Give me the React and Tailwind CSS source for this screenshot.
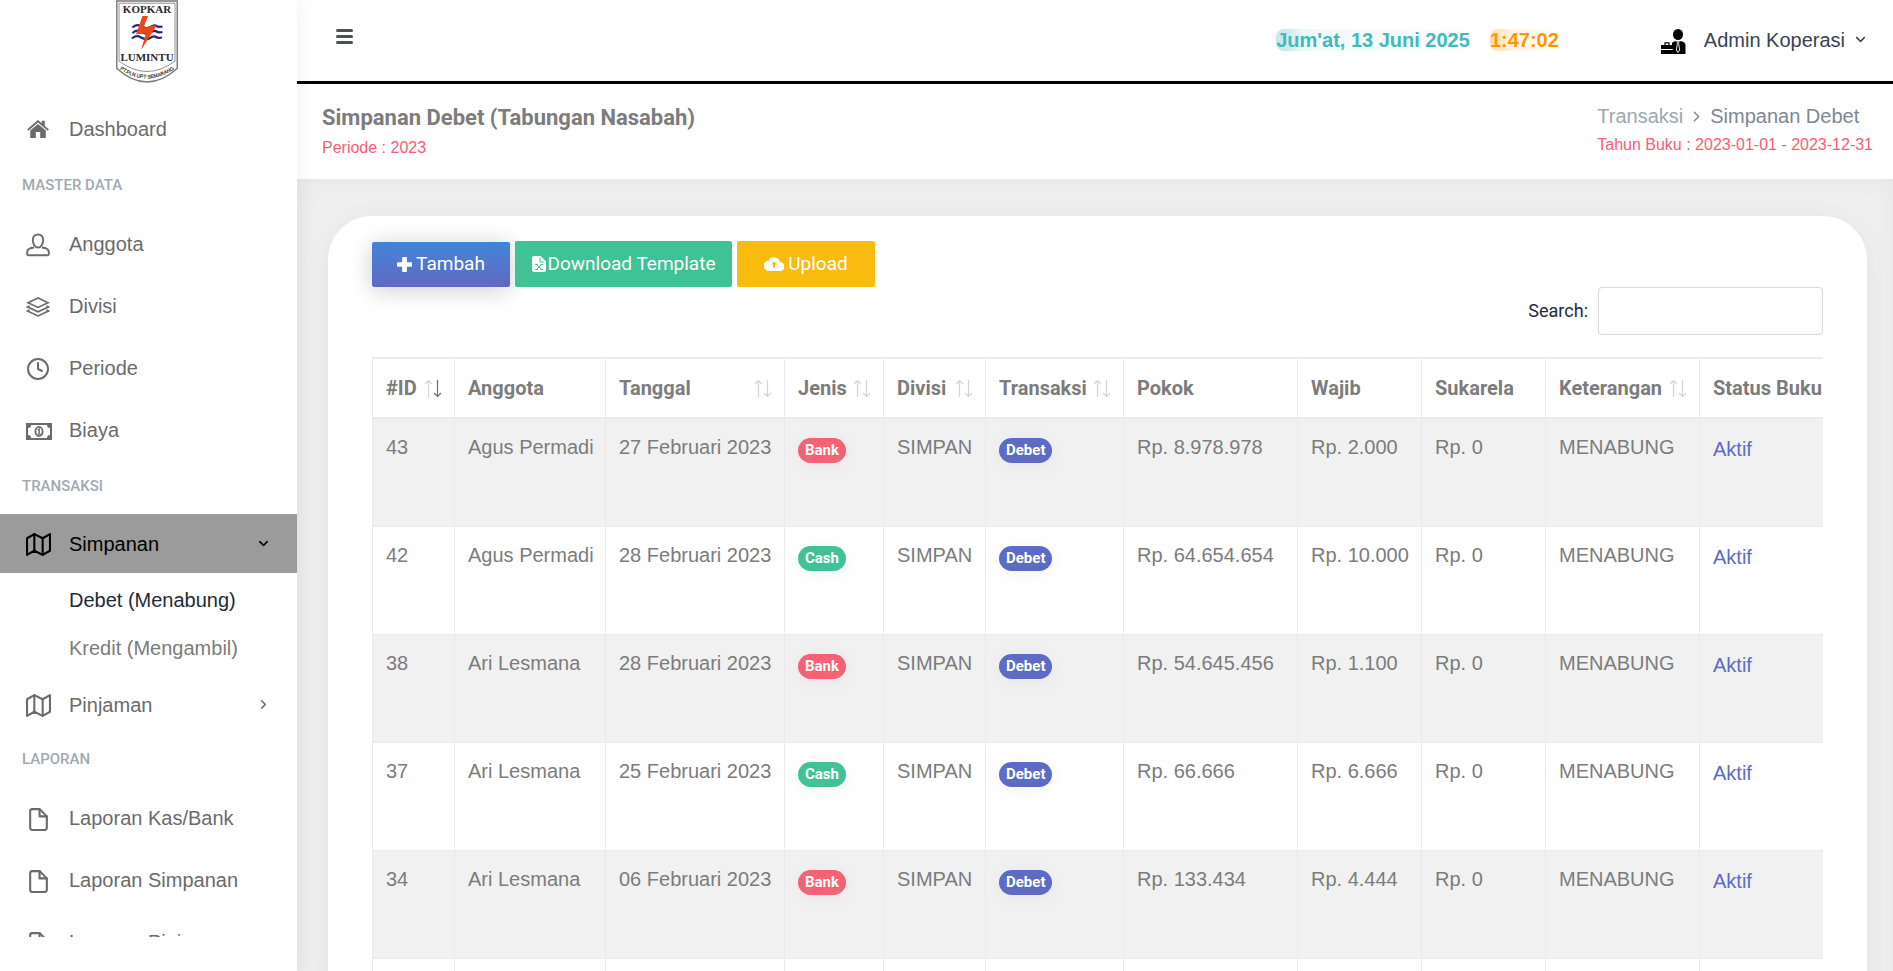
import { FiMap, FiFile, FiClock, FiChevronDown, FiChevronRight } from "react-icons/fi";

function HomeIcon() {
  return (
    <svg className="size-6" viewBox="0 0 24 24" fill="#6b6b6b">
      <path d="M12 2 1.2 11.3l1.2 1.5L12 4.6l9.6 8.2 1.2-1.5-4-3.4V2.8h-3v2.5z" />
      <path d="M12 6 4.2 12.6V20h5.6v-6h4.4v6h5.6v-7.4z" />
    </svg>
  );
}

function PersonIcon() {
  return (
    <svg className="size-6" viewBox="0 0 24 24" fill="none" stroke="#6b6b6b" strokeWidth="1.9">
      <path d="M12 1.500c-3.600 0-5.200 2.200-5.200 5.500 0 3.800 2.200 7.500 5.200 7.500s5.200-3.700 5.200-7.500c0-3.300-1.600-5.500-5.200-5.500z" />
      <path d="M8.200 14.500C4 14.800 1.200 15.800 1.200 19v1.800c0 .9.600 1.500 1.500 1.500h18.600c.9 0 1.500-.6 1.500-1.500V19c0-3.200-2.800-4.200-7-4.500" />
    </svg>
  );
}

function LayersIcon() {
  return (
    <svg className="size-6" viewBox="0 0 24 24" fill="none" stroke="#6b6b6b" strokeWidth="1.7">
      <path d="M12 3 2 7.700l10 4.700 10-4.700z" />
      <path d="m3.500 11-2 .9L12 16.800l10.500-4.900-2-.9" />
      <path d="m3.500 15-2 .9L12 20.900l10.500-5-2-.9" />
    </svg>
  );
}

function MoneyIcon() {
  return (
    <svg className="h-[17px] w-[26px]" viewBox="0 0 26 17">
      <path fill="#6b6b6b" fillRule="evenodd" d="M0 0h26v17H0zM5 2a3 3 0 0 1-3 3v7a3 3 0 0 1 3 3h16a3 3 0 0 1 3-3V5a3 3 0 0 1-3-3z" />
      <ellipse cx="13" cy="8.5" rx="3.6" ry="4.6" fill="none" stroke="#6b6b6b" strokeWidth="1.8" />
      <path d="M11.7 7.2 13.2 6v5m-1.800.2h3.400" fill="none" stroke="#6b6b6b" strokeWidth="1.3" />
    </svg>
  );
}

function BusinessmanIcon() {
  return (
    <svg className="size-[25px]" viewBox="0 0 25 25">
      <ellipse cx="17" cy="5.500" rx="5" ry="5.500" />
      <path d="M11 14c1-1.500 3-2 6-2s7.500.5 7.500 4.500V25H11z" />
      <path d="M15.800 12h2.400l-.6 2.200 1 6.800-1.600 2.600-1.600-2.600 1-6.800z" stroke="#fff" strokeWidth=".9" />
      <path d="M0 16h12v4H0zM0 21h12v4H0z" />
      <path d="M0 20.500h12" stroke="#fff" strokeWidth=".8" />
      <path d="M4 16v-2.200h4V16" fill="none" stroke="#000" strokeWidth="1.200" />
    </svg>
  );
}

function PlusIcon() {
  return (
    <svg className="size-[15px]" viewBox="0 0 16 16" fill="currentColor">
      <path d="M6.300 0h3.400a.8.8 0 0 1 .8.800v4.700h4.700a.8.8 0 0 1 .8.800v3.400a.8.8 0 0 1-.8.800h-4.700v4.700a.8.8 0 0 1-.8.800H6.300a.8.8 0 0 1-.8-.8v-4.700H.8a.8.8 0 0 1-.8-.8V6.300a.8.8 0 0 1 .8-.8h4.700V.8a.8.8 0 0 1 .8-.8z" />
    </svg>
  );
}

function ExcelIcon() {
  return (
    <svg className="h-4 w-[14px]" viewBox="0 0 14 16">
      <path fill="currentColor" d="M2 0h6.500L14 5.300V14a2 2 0 0 1-2 2H2a2 2 0 0 1-2-2V2a2 2 0 0 1 2-2z" />
      <path d="M8 1.500V6h4.500" fill="none" stroke="#3fc396" strokeWidth="1" />
      <path d="m4.500 8.500 5 5M9.500 8.500l-5 5M3.200 8.500h2.600m2.600 0H11m-7.800 5h2.600m2.600 0H11" fill="none" stroke="#3fc396" strokeWidth="1" />
    </svg>
  );
}

function CloudIcon() {
  return (
    <svg className="h-[14px] w-5" viewBox="0 0 20 14">
      <path fill="currentColor" d="M16.100 5.300A6.200 6.200 0 0 0 4.600 3.600 5.100 5.100 0 0 0 5 14h11a4.300 4.300 0 0 0 .1-8.700z" />
      <path fill="#f9bb0d" d="M10 4.300 12.900 7.600h-1.900v3.200H9V7.600H7.100z" />
    </svg>
  );
}

function Logo() {
  return (
    <svg className="h-[83px] w-[62px]" viewBox="0 0 62 83" role="img" aria-label="Kopkar Lumintu">
      <path d="M.8 1h60.400v67.500Q46 82 31 82T.8 68.500z" fill="#fff" stroke="#777" strokeWidth="1.4" />
      <path d="M3 3.200h56v58Q45 71.500 31 71.500T3 61.200z" fill="#fff" stroke="#777" strokeWidth=".8" />
      <g fill="none" stroke="#2e1f7a" strokeWidth="2.2">
        <path d="M16.500 27.500q4-4 9-1t9 .5 6-1 6 .5" />
        <path d="M16.500 33q4-4 9-1t9 .5 6-1 6 .5" />
        <path d="M16 38.500q4-4 9-1t9 .5 6-1 6 .5" />
      </g>
      <path d="M26.500 16H32l-4.500 11.500L41 25 25 50l5-16.500-10 .8z" fill="#ee4511" />
      <text x="31" y="12.500" textAnchor="middle" fontFamily="Liberation Serif, serif" fontWeight="700" fontSize="11" fill="#2b2b2b">KOPKAR</text>
      <text x="31" y="60.500" textAnchor="middle" fontFamily="Liberation Serif, serif" fontWeight="700" fontSize="11" fill="#2b2b2b">LUMINTU</text>
      <path id="logo-arc" d="M2 68Q17 78.500 31 78.500T60 68" fill="none" />
      <text fontFamily="Liberation Sans Narrow, Liberation Sans, sans-serif" fontSize="5" fill="#222" stroke="#222" strokeWidth=".15" textAnchor="middle">
        <textPath href="#logo-arc" startOffset="50%">PT.PLN UPT SEMARANG</textPath>
      </text>
    </svg>
  );
}

function NavItem({ icon, label }) {
  return (
    <a href="#" className="flex h-[62px] items-center px-[26px] text-xl text-[#6b6b6b]">
      <span className="flex w-[43px] items-center pt-[2px]">{icon}</span>
      {label}
    </a>
  );
}

function NavCaption({ children }) {
  return <p className="px-[22px] pt-[15px] pb-[18px] font-[Roboto,sans-serif] text-[15px] leading-5 font-medium text-[#a1aab2]">{children}</p>;
}

function Sidebar() {
  return (
    <aside className="relative z-10 flex w-[297px] shrink-0 flex-col bg-white shadow-[1px_0_20px_rgba(0,0,0,0.06)]">
      <a href="#" className="flex h-[98px] shrink-0 justify-center pr-[3px]"><Logo /></a>
      <nav className="mb-[34px] min-h-0 flex-1 overflow-hidden">
        <NavItem icon={<HomeIcon />} label="Dashboard" />
        <NavCaption>MASTER DATA</NavCaption>
        <NavItem icon={<PersonIcon />} label="Anggota" />
        <NavItem icon={<LayersIcon />} label="Divisi" />
        <NavItem icon={<FiClock size={24} />} label="Periode" />
        <NavItem icon={<MoneyIcon />} label="Biaya" />
        <NavCaption>TRANSAKSI</NavCaption>
        <button type="button" className="flex h-[59px] w-full items-center bg-[#9b9b9b] px-[26px] text-xl text-black">
          <span className="w-[43px] pt-[2px]"><FiMap size={25} /></span>
          Simpanan
          <FiChevronDown size={15} strokeWidth={2.5} className="ml-auto" />
        </button>
        <div className="flex flex-col py-[3px] pl-[69px] text-xl leading-[48px]">
          <a href="#" className="text-[#212b3b]">Debet (Menabung)</a>
          <a href="#" className="text-[#7c7c7c]">Kredit (Mengambil)</a>
        </div>
        <button type="button" className="flex h-[59px] w-full items-center px-[26px] text-xl text-[#6b6b6b]">
          <span className="w-[43px] pt-[2px]"><FiMap size={25} /></span>
          Pinjaman
          <FiChevronRight size={15} strokeWidth={2.5} className="ml-auto" />
        </button>
        <NavCaption>LAPORAN</NavCaption>
        <NavItem icon={<FiFile size={25} />} label="Laporan Kas/Bank" />
        <NavItem icon={<FiFile size={25} />} label="Laporan Simpanan" />
        <NavItem icon={<FiFile size={25} />} label="Laporan Pinjaman" />
      </nav>
    </aside>
  );
}

function Topbar() {
  return (
    <header className="flex h-[84px] items-center border-b-[3px] border-black bg-white pr-[25px] pb-[2px] text-xl">
      <button type="button" aria-label="Menu" className="mb-[6px] ml-[39px] flex flex-col gap-[3px]">
        <span className="h-[3px] w-[17px] rounded-full bg-[#4f5154]" />
        <span className="h-[3px] w-[17px] rounded-full bg-[#4f5154]" />
        <span className="h-[3px] w-[17px] rounded-full bg-[#4f5154]" />
      </button>
      <div className="ml-auto flex gap-5 leading-[22px] font-bold">
        <span className="rounded-lg bg-linear-to-r from-[#c9ebeb] from-5% via-[#f1fafa] via-15% to-[#fafdfd] text-[#43b9bd]">Jum'at, 13 Juni 2025</span>
        <span className="rounded-lg bg-linear-to-r from-[#ffe0b5] from-5% via-[#fff4e6] via-35% to-[#fffdfa] text-[#ff9800]">1:47:02</span>
      </div>
      <button type="button" className="ml-[102px] flex items-center text-[#3b4252]">
        <span className="pt-[3px]"><BusinessmanIcon /></span>
        <span className="ml-[18px]">Admin Koperasi</span>
        <FiChevronDown size={15} strokeWidth={2.5} className="ml-2" />
      </button>
    </header>
  );
}

function PageHeading() {
  return (
    <div className="flex h-[95px] justify-between bg-white px-[25px] pt-5 pr-5">
      <div>
        <h1 className="font-[Roboto,sans-serif] text-[22px] leading-7 font-bold text-[#7c7c7c]">Simpanan Debet (Tabungan Nasabah)</h1>
        <p className="pt-1 text-base leading-6 text-[#ff5b73]">Periode : 2023</p>
      </div>
      <div>
        <nav className="flex items-center gap-[5px] text-xl leading-6 text-[#7d8893]">
          <a href="#" className="text-[#9ba8b0]">Transaksi</a>
          <FiChevronRight size={17} />
          <span>Simpanan Debet</span>
        </nav>
        <p className="pt-[5px] text-base leading-6 text-[#ff5b73]">Tahun Buku : 2023-01-01 - 2023-12-31</p>
      </div>
    </div>
  );
}

const columns = [
  { label: "#ID", width: "w-[82px]", sort: "desc" },
  { label: "Anggota", width: "w-[151px]" },
  { label: "Tanggal", width: "w-[179px]", sort: "both" },
  { label: "Jenis", width: "w-[99px]", sort: "both" },
  { label: "Divisi", width: "w-[102px]", sort: "both" },
  { label: "Transaksi", width: "w-[138px]", sort: "both" },
  { label: "Pokok", width: "w-[174px]" },
  { label: "Wajib", width: "w-[124px]" },
  { label: "Sukarela", width: "w-[124px]" },
  { label: "Keterangan", width: "w-[154px]", sort: "both" },
  { label: "Status Buku", width: "w-[160px]" },
];

const rows = [
  { id: 43, name: "Agus Permadi", date: "27 Februari 2023", type: "Bank", pokok: "8.978.978", wajib: "2.000" },
  { id: 42, name: "Agus Permadi", date: "28 Februari 2023", type: "Cash", pokok: "64.654.654", wajib: "10.000" },
  { id: 38, name: "Ari Lesmana", date: "28 Februari 2023", type: "Bank", pokok: "54.645.456", wajib: "1.100" },
  { id: 37, name: "Ari Lesmana", date: "25 Februari 2023", type: "Cash", pokok: "66.666", wajib: "6.666" },
  { id: 34, name: "Ari Lesmana", date: "06 Februari 2023", type: "Bank", pokok: "133.434", wajib: "4.444" },
  { id: 33, name: "Ari Lesmana", date: "05 Februari 2023", type: "Cash", pokok: "120.000", wajib: "4.000" },
];

function SortArrows({ state }) {
  return (
    <svg className="h-[19px] w-[18px] shrink-0" viewBox="0 0 18 19" fill="none" strokeWidth="1.2">
      <path d="M4.500 18V1.500M1 5l3.500-3.500L8 5" stroke="#d4d4d4" />
      <path d="M13.500 1v16.500M10 14l3.500 3.500L17 14" stroke={state === "desc" ? "#6f6f6f" : "#d4d4d4"} />
    </svg>
  );
}

function Badge({ kind }) {
  const colors = { Bank: "bg-[#f46273]", Cash: "bg-[#3fc396]", Debet: "bg-[#5d6bc4]" };
  return (
    <span className={`mt-[6px] inline-block rounded-full px-[7px] font-[Roboto,sans-serif] text-[15px] leading-[25px] font-bold text-white shadow-[0_3px_20px_rgba(0,0,0,0.05)] ${colors[kind]}`}>
      {kind}
    </span>
  );
}

function DataTable() {
  const cell = "border border-[#e8eaed] pl-[13px] pt-[13px] text-left align-top font-normal whitespace-nowrap";
  return (
    <div className="overflow-hidden">
      <table className="w-[1488px] table-fixed border-collapse text-xl leading-[30px] text-[#7c7c7c]">
        <thead>
          <tr className="h-[60px] font-[Roboto,sans-serif]">
            {columns.map((c) => (
              <th key={c.label} className={`border-x border-y-2 border-x-[#e8eaed] border-y-[#e8ecef] pr-3 pl-[13px] text-left font-bold whitespace-nowrap ${c.width}`}>
                <div className="flex items-center justify-between">
                  {c.label}
                  {c.sort && <SortArrows state={c.sort} />}
                </div>
              </th>
            ))}
          </tr>
        </thead>
        <tbody>
          {rows.map((r) => (
            <tr key={r.id} className="h-[108px] odd:bg-[#f1f1f1]">
              <td className={cell}>{r.id}</td>
              <td className={cell}>{r.name}</td>
              <td className={cell}>{r.date}</td>
              <td className={cell}><Badge kind={r.type} /></td>
              <td className={cell}>SIMPAN</td>
              <td className={cell}><Badge kind="Debet" /></td>
              <td className={cell}>Rp. {r.pokok}</td>
              <td className={cell}>Rp. {r.wajib}</td>
              <td className={cell}>Rp. 0</td>
              <td className={cell}>MENABUNG</td>
              <td className={cell}><a href="#" className="inline-block pt-0.5 text-[#5d6bc4]">Aktif</a></td>
            </tr>
          ))}
        </tbody>
      </table>
    </div>
  );
}

export default function App() {
  const button = "flex items-center justify-center rounded-xs font-[Roboto,sans-serif] text-[19px] text-white";
  return (
    <div className="flex h-screen overflow-hidden bg-[#efefef] font-[Liberation_Sans,Arial,sans-serif]">
      <Sidebar />
      <div className="min-w-0 flex-1">
        <Topbar />
        <PageHeading />
        <main className="pt-[37px] pr-[26px] pl-[31px] shadow-[inset_0_2px_25px_rgba(0,0,0,0.04)]">
          <section className="rounded-[44px] bg-white px-11 pt-[25px] pb-11 shadow-[0_3px_30px_rgba(0,0,0,0.05)]">
            <div className="flex items-end gap-[5px]">
              <button type="button" className={`${button} h-[45px] w-[138px] gap-1 bg-linear-to-b from-[#3f84d9] to-[#5f69c2] shadow-[0_3px_25px_rgba(0,0,0,0.2)]`}>
                <PlusIcon />Tambah
              </button>
              <button type="button" className={`${button} h-[46px] w-[217px] gap-[2px] bg-[#3fc396]`}>
                <ExcelIcon />Download Template
              </button>
              <button type="button" className={`${button} h-[46px] w-[138px] gap-1 bg-[#f9bb0d]`}>
                <CloudIcon />Upload
              </button>
            </div>
            <div className="flex items-center justify-end gap-[10px] pb-[22px]">
              <label htmlFor="search" className="pb-[2px] font-[Roboto,sans-serif] text-[18px] text-[#212b3b]">Search:</label>
              <input id="search" type="search" className="h-12 w-[225px] rounded border border-[#d9d9d9] px-3 outline-none" />
            </div>
            <DataTable />
          </section>
        </main>
      </div>
    </div>
  );
}
